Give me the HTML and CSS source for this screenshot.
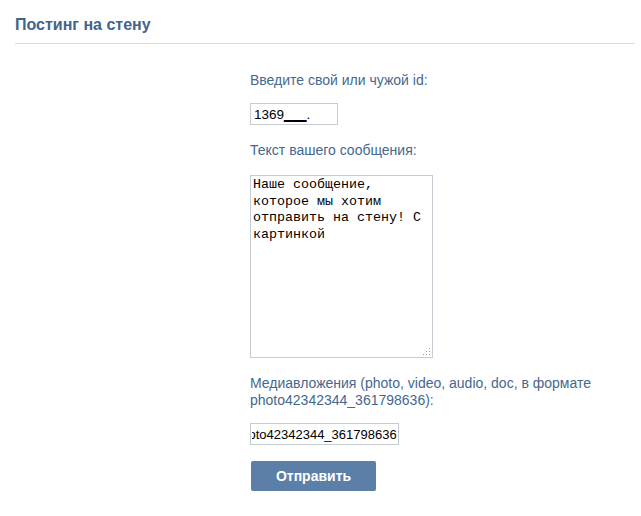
FILE: index.html
```html
<!DOCTYPE html>
<html lang="ru">
<head>
<meta charset="utf-8">
<title>Постинг на стену</title>
<link rel="stylesheet" href="styles.css">
</head>
<body>
<div class="page">
  <h1 class="title">Постинг на стену</h1>
  <form class="form">
    <label class="label label-first" for="uid">Введите свой или чужой id:</label>
    <input class="field field-id" id="uid" type="text" value="1369‗‗‗.">
    <label class="label" for="msg">Текст вашего сообщения:</label>
    <textarea class="message" id="msg">Наше сообщение, которое мы хотим отправить на стену! С картинкой</textarea>
    <label class="label" for="media">Медиавложения (photo, video, audio, doc, в формате photo42342344_361798636):</label>
    <input class="field field-media" id="media" type="text" value="photo42342344_361798636">
    <button class="submit" type="button">Отправить</button>
  </form>
</div>
</body>
</html>
```

FILE: styles.css
```css
html, body {
  margin: 0;
  padding: 0;
  background: #ffffff;
}

body {
  font-family: "Liberation Sans", Arial, sans-serif;
  font-size: 14px;
}

.page {
  padding: 0 6px 0 15px;
}

.title {
  margin: 0;
  padding: 16px 0 9px;
  font-size: 16px;
  line-height: 18px;
  font-weight: bold;
  color: #42648b;
  border-bottom: 1px solid #dadada;
}

.form {
  display: flex;
  flex-direction: column;
  align-items: flex-start;
  padding-left: 235px;
  width: 380px;
}

.label {
  display: block;
  margin-top: 17px;
  font-size: 14px;
  line-height: 17px;
  color: #45688e;
}

.label-first {
  margin-top: 28px;
}

.field {
  display: block;
  box-sizing: border-box;
  height: 22px;
  margin: 14px 0 0;
  padding: 0 1px 0 3px;
  border: 1px solid #c5ccd4;
  border-radius: 0;
  font-family: "Liberation Sans", Arial, sans-serif;
  font-size: 13.5px;
  color: #000000;
  background: #ffffff;
  outline: none;
}

.field-id {
  width: 88px;
}

.field-media {
  width: 149px;
  padding-left: 1px;
  font-size: 13px;
  text-indent: -18px;
}

.message {
  display: block;
  box-sizing: border-box;
  width: 183px;
  height: 183px;
  margin: 16px 0 0;
  padding: 1px 2px;
  border: 1px solid #c5ccd4;
  resize: none;
  font-family: "Liberation Mono", "Courier New", monospace;
  font-size: 13.333px;
  line-height: 16.5px;
  color: #000000;
  background-color: #ffffff;
  background-image: url("data:image/svg+xml;utf8,<svg xmlns='http://www.w3.org/2000/svg' width='7' height='7'><g fill='%23999'><rect x='6' y='0' width='1' height='1'/><rect x='3' y='3' width='1' height='1'/><rect x='6' y='3' width='1' height='1'/><rect x='0' y='6' width='1' height='1'/><rect x='3' y='6' width='1' height='1'/><rect x='6' y='6' width='1' height='1'/></g></svg>");
  background-repeat: no-repeat;
  background-position: right 2px bottom 2px;
  outline: none;
}

.submit {
  display: block;
  box-sizing: border-box;
  width: 125px;
  height: 30px;
  margin: 16px 0 0 1px;
  padding: 0;
  border: none;
  border-radius: 2px;
  background: #5b7fa6;
  color: #ffffff;
  font-family: "Liberation Sans", Arial, sans-serif;
  font-size: 14px;
  font-weight: bold;
  cursor: pointer;
}
```
